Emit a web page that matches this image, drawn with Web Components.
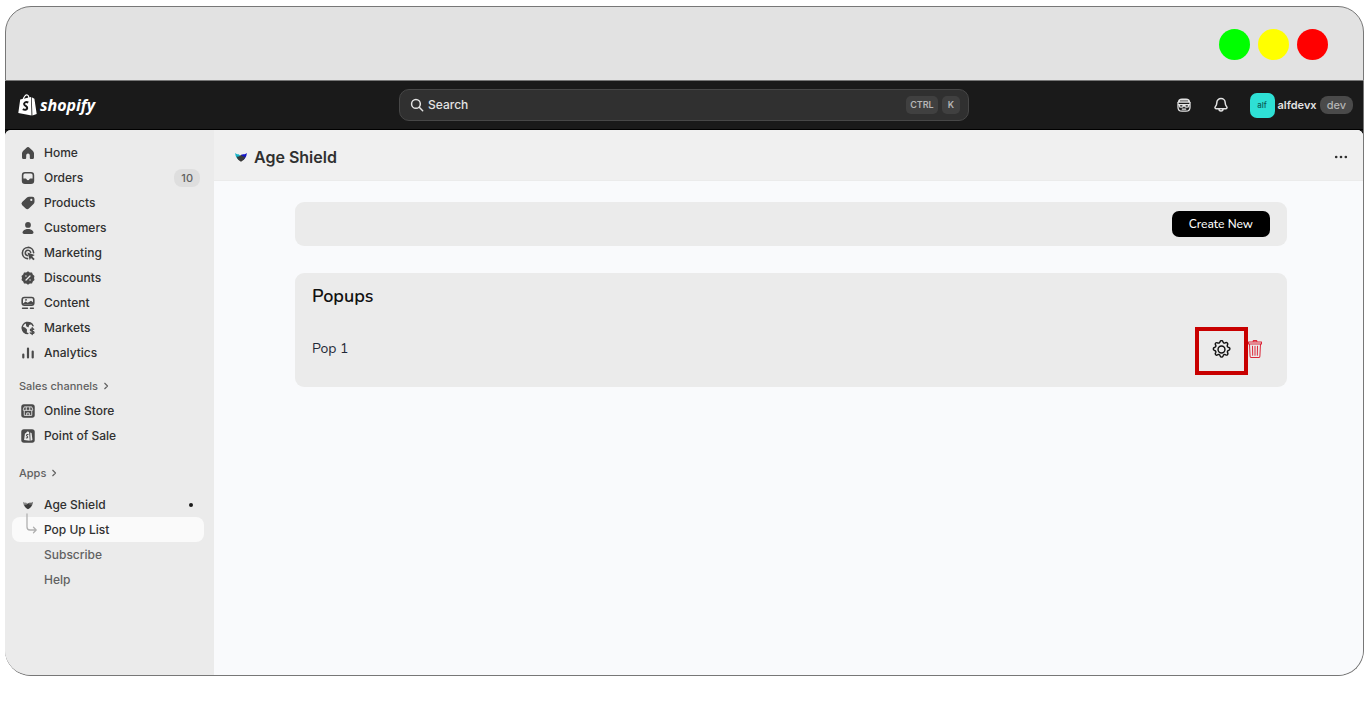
<!DOCTYPE html>
<html lang="en">
<head>
<meta charset="utf-8">
<meta name="viewport" content="width=device-width, initial-scale=1">
<title>Age Shield</title>
<style>
    body {
        margin: 0;
        background: #fff;
        color: #303030;
        font-family: Inter, "Liberation Sans", sans-serif;
        font-size: 12px;
    }
</style>
</head>
<body>
<window-frame>
    <top-bar></top-bar>
    <side-nav slot="side">
        <nav-item icon="home">Home</nav-item>
        <nav-item icon="orders" badge="10">Orders</nav-item>
        <nav-item icon="products">Products</nav-item>
        <nav-item icon="customers">Customers</nav-item>
        <nav-item icon="marketing">Marketing</nav-item>
        <nav-item icon="discounts">Discounts</nav-item>
        <nav-item icon="content">Content</nav-item>
        <nav-item icon="markets">Markets</nav-item>
        <nav-item icon="analytics">Analytics</nav-item>
        <nav-heading>Sales channels</nav-heading>
        <nav-item icon="store">Online Store</nav-item>
        <nav-item icon="pos">Point of Sale</nav-item>
        <nav-heading class="apps">Apps</nav-heading>
        <nav-item icon="shield" dot>Age Shield</nav-item>
        <nav-item icon="branch" current>Pop Up List</nav-item>
        <nav-item sub>Subscribe</nav-item>
        <nav-item sub>Help</nav-item>
    </side-nav>
    <app-page slot="page" heading="Age Shield">
        <panel-card class="actions">
            <create-button>Create New</create-button>
        </panel-card>
        <panel-card heading="Popups">
            <popup-row>Pop 1</popup-row>
        </panel-card>
    </app-page>
</window-frame>

<script>
const ICONS = {
    home: '<path fill="currentColor" d="M8.9 2.3a1.4 1.4 0 0 0-1.8 0L3.3 5.700A4 4 0 0 0 2 8.600V12.500A1.500 1.500 0 0 0 3.500 14H5.300a.9.9 0 0 0 .9-.9V10.400a1.800 1.800 0 0 1 3.600 0v2.700a.9.9 0 0 0 .9.9h1.800a1.500 1.500 0 0 0 1.500-1.500V8.600a4 4 0 0 0-1.300-2.900z"/>',
    orders: '<path fill="currentColor" fill-rule="evenodd" d="M5 2h6a3.200 3.200 0 0 1 3.200 3.200v5.600A3.200 3.200 0 0 1 11 14H5a3.200 3.200 0 0 1-3.200-3.200V5.200A3.200 3.200 0 0 1 5 2zm0 1.600A1.600 1.600 0 0 0 3.400 5.200V8.500h1.800c.9 0 1.200.4 1.500 1 .3.500.6.700 1.300.700s1-.2 1.300-.7c.3-.6.6-1 1.500-1h1.800V5.200A1.600 1.600 0 0 0 11 3.600z"/>',
    products: '<path fill="currentColor" fill-rule="evenodd" d="M9.300 1.800h3A2.200 2.200 0 0 1 14.500 4v2.700c0 .9-.3 1.700-1 2.400l-4.600 4.500a2.300 2.300 0 0 1-3.200 0L2.200 10.200a2.300 2.300 0 0 1 0-3.200l4.500-4.200c.7-.7 1.600-1 2.600-1zM11.300 6a1.100 1.100 0 1 0 0-2.200 1.100 1.100 0 0 0 0 2.200z"/>',
    customers: '<circle cx="8" cy="4.900" r="2.900" fill="currentColor"/><path fill="currentColor" d="M8 8.900c-3 0-5.500 1.700-5.500 3.700 0 .9.700 1.300 1.500 1.300h8c.8 0 1.500-.4 1.500-1.300 0-2-2.500-3.700-5.500-3.700z"/>',
    marketing: '<g fill="none" stroke="currentColor" stroke-width="1.600" stroke-linecap="round"><path d="M13.600 7.600A5.600 5.600 0 1 0 7.500 13.600"/><path d="M10.600 7.300A2.700 2.700 0 1 0 7.300 10.600"/></g><path fill="currentColor" d="M7.500 7.500l7.300 2.600-2.600 1.500 2.500 2.400-1.300 1.200-2.400-2.300-1.200 2.300z"/>',
    discounts: '<path fill="currentColor" d="M8 1.200l1.800 1.200 2.200.1.800 2.100L14.500 6 14 8l.5 2-1.700 1.400-.8 2.100-2.200.1L8 14.800l-1.800-1.200-2.200-.1-.8-2.100L1.500 10 2 8l-.5-2 1.700-1.400.8-2.100 2.200-.1z"/><g fill="none" stroke="#ebebeb" stroke-width="1.300" stroke-linecap="round"><path d="M6 10l4-4M5.900 6h.1M10 10h.1"/></g>',
    content: '<rect x="2.200" y="2.500" width="11.600" height="7.800" rx="2.200" fill="none" stroke="currentColor" stroke-width="1.600"/><path fill="currentColor" d="M3 8.500l2.500-2 2.200 1.300L11 5.700l2.300 1.900v2H3zM6 4a.9.900 0 1 0 .1 1.800A.9.900 0 0 0 6 4z"/><path stroke="currentColor" stroke-width="1.400" stroke-linecap="round" d="M2.500 13.300h5M10.400 13.300h3"/>',
    markets: '<path fill="none" stroke="currentColor" stroke-width="1.500" stroke-linecap="round" d="M7.800 13.600A5.600 5.600 0 1 1 13 5.800"/><path fill="currentColor" d="M2.300 6.800L5 7.500l2 2-.3 4.300L3.200 12zM5.800 2.500L9 2l3.200 2-2.900.9-.9 2.600-2.200-1.300z"/><path fill="none" stroke="currentColor" stroke-width="1.400" stroke-linecap="round" d="M13.700 9.300c-.5-.7-3.300-.8-3.300.8s3.600.8 3.600 2.300-3 1.400-3.700.5M12.200 7.800v6.800"/>',
    analytics: '<path stroke="currentColor" stroke-width="2.200" stroke-linecap="round" d="M3.300 9.500v3M8 3.600v8.900M12.700 6.600v5.900"/>',
    store: '<rect x=".3" y=".3" width="15.400" height="15.400" rx="3" fill="currentColor"/><g fill="none" stroke="#ebebeb"><path d="M3.800 3.300h8.400L13.300 6v1.200H2.700V6zM3.700 7.500V13h8.600V7.500M6.500 13v-2.800h3V13M6 3.500v4M10 3.500v4"/></g>',
    pos: '<rect x=".3" y=".3" width="15.400" height="15.400" rx="3" fill="currentColor"/><path fill="#ebebeb" d="M4.500 5l1.300-.5C6.300 2.900 8 2 9.200 3.500L10 13.500l-6.500-1zM10.500 3.900l1.600.7 1 8.100-2.200.8z"/><path fill="none" stroke="#4a4a4a" stroke-width="1.200" d="M8.500 6.400c-2.200-.7-2.800 1-1.600 1.800s1 2.500-1.300 1.900"/>',
    shield: '<path fill="var(--left, #8b8b8b)" d="M1.300 3.500c1.500 1.300 3 1.500 4 1.300L8 7l-2.500 4.500C3 10 1.700 7.500 1.300 3.500z"/><path fill="var(--right, #666)" d="M14.700 3.500c-1.500 1.300-3 1.500-4 1.300L8 5.500v5l3 .8c2.200-1.600 3.400-4.300 3.700-7.800z"/><path fill="#3a3a3a" d="M3 7.500c2.500.6 4-.6 5-2 1 1.400 2.500 2.600 5 2-.8 3-2.500 4.800-5 6-2.500-1.200-4.200-3-5-6z"/>',
    chevron: '<path fill="none" stroke="currentColor" stroke-width="2.300" stroke-linecap="round" stroke-linejoin="round" d="M5.500 2.500L11 8l-5.500 5.500"/>',
    search: '<g fill="none" stroke="currentColor" stroke-width="1.700" stroke-linecap="round"><circle cx="6.800" cy="6.800" r="5"/><path d="M10.600 10.600l3.900 3.900"/></g>',
    sidekick: '<path fill="currentColor" d="M6 1.500h4c2.600 0 4.300 1.500 4.300 4.200H1.700C1.700 3 3.400 1.500 6 1.500z"/><path stroke="#1a1a1a" stroke-width=".7" d="M4 3.900h8"/><g fill="none" stroke="currentColor" stroke-width="1.300"><path d="M2 5v5.200c0 2.700 1.500 4 4 4h4c2.500 0 4-1.300 4-4V5"/><path d="M2 7.600h12M3.500 8v1q0 1.200 1.500 1.200h.6q1.400 0 1.400-1.200h2q0 1.200 1.400 1.200h.6q1.500 0 1.500-1.200V8M5.800 12.200h4.400"/></g>',
    bell: '<g fill="none" stroke="currentColor" stroke-width="1.500" stroke-linejoin="round"><path d="M8 1.500A4.200 4.200 0 0 0 3.800 5.700c0 2-.5 2.900-1.500 4-.9 1 .1 2 1 2h9.400c.9 0 1.900-1 1-2-1-1.100-1.500-2-1.500-4A4.200 4.200 0 0 0 8 1.500z"/><path d="M6 12a2 2 0 0 0 4 0"/></g>',
    dots: '<g fill="currentColor"><circle cx="2.500" cy="8" r="1.500"/><circle cx="8" cy="8" r="1.500"/><circle cx="13.500" cy="8" r="1.500"/></g>',
    gear: '<g fill="none" stroke="currentColor" stroke-width="1.200"><circle cx="8" cy="8" r="2.900"/><path stroke-linejoin="round" d="M6.800 1.400c.4-1.200 2-1.200 2.400 0l.1.300a1.300 1.300 0 0 0 1.800.8l.4-.2c1-.5 2.200.6 1.600 1.700l-.1.300a1.300 1.300 0 0 0 .8 1.900l.4.100c1.200.3 1.200 2 0 2.400l-.4.100a1.300 1.300 0 0 0-.7 1.800l.1.300c.6 1.100-.5 2.200-1.600 1.700l-.3-.2a1.300 1.300 0 0 0-1.900.8l-.1.300c-.4 1.200-2 1.200-2.400 0l-.1-.3a1.300 1.300 0 0 0-1.900-.8l-.3.200c-1.100.6-2.200-.5-1.700-1.600l.2-.4a1.300 1.300 0 0 0-.8-1.800l-.3-.1c-1.200-.4-1.200-2 0-2.400l.3-.1a1.300 1.300 0 0 0 .8-1.900l-.2-.3c-.5-1.100.6-2.200 1.700-1.600l.3.100a1.300 1.300 0 0 0 1.800-.8z"/></g>',
    trash: '<g fill="none" stroke="currentColor" stroke-linecap="round" stroke-linejoin="round"><path d="M2.500 3.500l.6 11c0 .6.400 1 1 1h7.800c.6 0 1-.4 1-1l.6-11M1.500 1.800h13v1.700h-13zM6 1.500l.4-1h3.200l.4 1M5.500 5.500l.2 8M8 5.500v8M10.500 5.500l-.2 8"/></g>'
};

function icon(name, size = 16) {
    return `<svg viewBox="0 0 16 16" width="${size}" height="${size}" aria-hidden="true">${ICONS[name]}</svg>`;
}

class WindowFrame extends HTMLElement {
    connectedCallback() {
        this.attachShadow({ mode: 'open' });
        this.shadowRoot.innerHTML = `
            <style>
                :host {
                    display: flex;
                    flex-direction: column;
                    box-sizing: border-box;
                    min-height: 100vh;
                    padding: 6px 2px 29px 5px;
                }
                .title-bar {
                    display: flex;
                    justify-content: flex-end;
                    gap: 8px;
                    padding: 22px 35px 20px;
                    border: 1px solid #777;
                    border-radius: 26px 26px 0 0;
                    background: #e2e2e2;
                }
                .light {
                    width: 31px;
                    height: 31px;
                    border-radius: 50%;
                }
                .screen {
                    flex: 1;
                    display: flex;
                    flex-direction: column;
                    overflow: hidden;
                    border: solid #777;
                    border-width: 0 1px 1px 0;
                    border-radius: 0 0 26px 26px;
                    background: #1a1a1a;
                }
                .content {
                    flex: 1;
                    display: grid;
                    grid-template-columns: 209px 1fr;
                    overflow: hidden;
                    border-radius: 6px 6px 0 0;
                    background: #f9fafc;
                }
            </style>
            <div class="title-bar">
                <span class="light" style="background: #0f0"></span>
                <span class="light" style="background: #ff0"></span>
                <span class="light" style="background: #f00"></span>
            </div>
            <div class="screen">
                <slot></slot>
                <div class="content">
                    <slot name="side"></slot>
                    <slot name="page"></slot>
                </div>
            </div>
        `;
    }
}

class TopBar extends HTMLElement {
    connectedCallback() {
        this.attachShadow({ mode: 'open' });
        this.shadowRoot.innerHTML = `
            <style>
                :host {
                    display: grid;
                    grid-template-columns: 1fr minmax(200px, 570px) 1fr;
                    align-items: center;
                    height: 48px;
                    padding: 0 10px;
                    border-bottom: 1px solid #000;
                    background: #1a1a1a;
                    color: #e3e3e3;
                }
                .logo {
                    display: flex;
                    align-items: center;
                    gap: 3px;
                    padding-left: 3px;
                    color: #fff;
                    font: italic 700 16px/24px "Open Sans", sans-serif;
                    text-decoration: none;
                }
                .search {
                    display: flex;
                    align-items: center;
                    gap: 4px;
                    box-sizing: border-box;
                    height: 32px;
                    padding: 0 8px 0 10px;
                    border: 1px solid #474747;
                    border-radius: 10px;
                    background: #303030;
                }
                input {
                    flex: 1;
                    min-width: 0;
                    padding: 0;
                    border: 0;
                    outline: 0;
                    background: none;
                    color: inherit;
                    font: 500 12px/16px Inter, sans-serif;
                }
                input::placeholder {
                    color: #e3e3e3;
                    opacity: 1;
                }
                kbd {
                    padding: 0 4px;
                    border-radius: 5px;
                    background: #404040;
                    color: #b5b5b5;
                    font: 600 9px/18px Inter, sans-serif;
                }
                kbd + kbd {
                    padding: 0 6px;
                }
                .tools {
                    display: flex;
                    align-items: center;
                    justify-content: flex-end;
                    gap: 21px;
                }
                button {
                    display: flex;
                    align-items: center;
                    padding: 0;
                    border: 0;
                    background: none;
                    color: inherit;
                    font: inherit;
                }
                .account {
                    gap: 3px;
                    font: 600 11px/16px Inter, sans-serif;
                }
                .avatar {
                    width: 25px;
                    border-radius: 7px;
                    background: #2ee0d5;
                    color: #0b5c57;
                    font: 500 8px/25px Inter, sans-serif;
                    text-align: center;
                }
                .plan {
                    padding: 0 7px;
                    border-radius: 8px;
                    background: #4a4a4a;
                    color: #b5b5b5;
                    font: 500 11px/18px Inter, sans-serif;
                }
            </style>
            <a class="logo" href="#">
                <svg width="19" height="22" viewBox="0 0 19 22" aria-hidden="true">
                    <path fill="#fff" d="M2.200 5.500L13 3l.5 18.500L.3 19zM13.700 3.200l2.700 1.500L18.700 20l-4.300 1.500z"/>
                    <path fill="none" stroke="#fff" stroke-width="1.200" d="M5 6.500C5.500 2.500 8 .7 9.200 1c1.300.3 1.800 2 1.700 4"/>
                    <path fill="none" stroke="#1a1a1a" stroke-width="2" d="M10.300 8.500C7.500 7.300 5.600 9 6.200 10.500s3.200 1.700 3 3.700-2.800 2-4.400 1"/>
                </svg>
                shopify
            </a>
            <label class="search">
                ${icon('search', 14)}
                <input type="text" placeholder="Search" aria-label="Search">
                <kbd>CTRL</kbd><kbd>K</kbd>
            </label>
            <div class="tools">
                <button aria-label="Sidekick">${icon('sidekick')}</button>
                <button aria-label="Notifications">${icon('bell')}</button>
                <button class="account">
                    <span class="avatar">alf</span>alfdevx<span class="plan">dev</span>
                </button>
            </div>
        `;
    }
}

class SideNav extends HTMLElement {
    connectedCallback() {
        this.attachShadow({ mode: 'open' });
        this.shadowRoot.innerHTML = `
            <style>
                :host {
                    display: block;
                    padding: 10px 10px 0 7px;
                    background: #ebebeb;
                }
                ::slotted(nav-heading) {
                    margin-top: 8px;
                }
                ::slotted(.apps) {
                    margin: 12px 0 7px;
                }
            </style>
            <nav><slot></slot></nav>
        `;
    }
}

class NavItem extends HTMLElement {
    iconMarkup() {
        const name = this.getAttribute('icon');
        const sizes = { store: 14, pos: 14, shield: 12 };
        if (name === 'branch') {
            return `<svg class="branch" width="14" height="22" viewBox="0 0 14 22" aria-hidden="true">
                <path fill="none" stroke="#b0b0b0" stroke-width="1.300" stroke-linecap="round" stroke-linejoin="round" d="M2 1v13q0 3 3 3h6M8.500 14.300L11.200 17l-2.700 2.700"/>
            </svg>`;
        }
        return name ? icon(name, sizes[name]) : '';
    }

    connectedCallback() {
        const badge = this.getAttribute('badge');
        this.attachShadow({ mode: 'open' });
        this.shadowRoot.innerHTML = `
            <style>
                :host {
                    display: block;
                }
                a {
                    display: flex;
                    align-items: center;
                    gap: 8px;
                    height: 25px;
                    padding: 0 4px 0 8px;
                    border-radius: 8px;
                    color: #303030;
                    font: 500 12px/16px Inter, sans-serif;
                    text-decoration: none;
                }
                :host([sub]) a {
                    color: #616161;
                }
                :host([current]) a {
                    background: #fafafa;
                }
                .icon {
                    position: relative;
                    display: flex;
                    justify-content: center;
                    width: 16px;
                    color: #4a4a4a;
                }
                /* elbow from the parent app down to its open page */
                .branch {
                    position: absolute;
                    left: 5px;
                    bottom: -5px;
                }
                .label {
                    flex: 1;
                }
                .badge {
                    padding: 0 7px;
                    border-radius: 8px;
                    background: #dedede;
                    color: #616161;
                    font-size: 11px;
                    line-height: 18px;
                }
                .dot {
                    width: 4px;
                    height: 4px;
                    margin-right: 7px;
                    border-radius: 50%;
                    background: #1a1a1a;
                }
            </style>
            <a href="#" ${this.hasAttribute('current') ? 'aria-current="page"' : ''}>
                <span class="icon">${this.iconMarkup()}</span>
                <span class="label"><slot></slot></span>
                ${badge ? `<span class="badge">${badge}</span>` : ''}
                ${this.hasAttribute('dot') ? '<span class="dot"></span>' : ''}
            </a>
        `;
    }
}

class NavHeading extends HTMLElement {
    connectedCallback() {
        this.attachShadow({ mode: 'open' });
        this.shadowRoot.innerHTML = `
            <style>
                :host {
                    display: block;
                }
                a {
                    display: flex;
                    align-items: center;
                    gap: 4px;
                    height: 25px;
                    padding: 0 7px;
                    color: #616161;
                    font: 500 11px/16px Inter, sans-serif;
                    text-decoration: none;
                }
            </style>
            <a href="#"><slot></slot>${icon('chevron', 8)}</a>
        `;
    }
}

class AppPage extends HTMLElement {
    connectedCallback() {
        this.attachShadow({ mode: 'open' });
        this.shadowRoot.innerHTML = `
            <style>
                :host {
                    display: block;
                    background: #f9fafc;
                }
                header {
                    display: flex;
                    align-items: center;
                    gap: 6px;
                    height: 51px;
                    padding: 3px 15px 0 20px;
                    box-sizing: border-box;
                    border-bottom: 1px solid #ebebeb;
                    background: #f0f0f0;
                    --left: #19b5c9;
                    --right: #1414c8;
                }
                h1 {
                    flex: 1;
                    margin: 0;
                    font: 600 16px/24px Inter, sans-serif;
                }
                button {
                    display: flex;
                    padding: 0;
                    border: 0;
                    background: none;
                    color: #303030;
                }
                main {
                    display: grid;
                    gap: 27px;
                    padding: 21px 76px 0 81px;
                }
            </style>
            <header>
                ${icon('shield', 14)}
                <h1>${this.getAttribute('heading')}</h1>
                <button aria-label="More actions">${icon('dots', 14)}</button>
            </header>
            <main><slot></slot></main>
        `;
    }
}

class PanelCard extends HTMLElement {
    connectedCallback() {
        const heading = this.getAttribute('heading');
        this.attachShadow({ mode: 'open' });
        this.shadowRoot.innerHTML = `
            <style>
                :host {
                    display: block;
                    padding: 11px 24px 26px 17px;
                    border-radius: 9px;
                    background: #ebebeb;
                    color: #1f2937;
                }
                :host(.actions) {
                    padding: 9px 17px;
                }
                h2 {
                    margin: 0 0 29px;
                    color: #111;
                    font: 600 18px/24px "Nunito", "Open Sans", sans-serif;
                }
            </style>
            ${heading ? `<h2>${heading}</h2>` : ''}
            <slot></slot>
        `;
    }
}

class CreateButton extends HTMLElement {
    connectedCallback() {
        this.attachShadow({ mode: 'open' });
        this.shadowRoot.innerHTML = `
            <style>
                :host {
                    display: flex;
                    justify-content: flex-end;
                }
                button {
                    padding: 0 17px;
                    border: 0;
                    border-radius: 7px;
                    background: #000;
                    color: #fff;
                    font: 500 12px/26px "Nunito", "Open Sans", sans-serif;
                }
            </style>
            <button><slot></slot></button>
        `;
    }
}

class PopupRow extends HTMLElement {
    connectedCallback() {
        this.attachShadow({ mode: 'open' });
        this.shadowRoot.innerHTML = `
            <style>
                :host {
                    display: flex;
                    align-items: center;
                    gap: 16px;
                    font: 400 14px/24px "Nunito", "Open Sans", sans-serif;
                }
                .name {
                    flex: 1;
                }
                button {
                    display: flex;
                    padding: 0;
                    border: 0;
                    background: none;
                }
                .settings {
                    position: relative;
                    color: #111;
                }
                /* marker drawn over the settings button */
                .settings::after {
                    content: "";
                    position: absolute;
                    inset: -13px -17px -16px;
                    border: 4px solid #c80000;
                }
                .delete {
                    color: #dc2638;
                }
            </style>
            <span class="name"><slot></slot></span>
            <button class="settings" aria-label="Settings">${icon('gear', 19)}</button>
            <button class="delete" aria-label="Delete">
                <svg width="16" height="18" viewBox="0 0 16 16" preserveAspectRatio="none" aria-hidden="true">${ICONS.trash}</svg>
            </button>
        `;
    }
}

customElements.define('window-frame', WindowFrame);
customElements.define('top-bar', TopBar);
customElements.define('side-nav', SideNav);
customElements.define('nav-item', NavItem);
customElements.define('nav-heading', NavHeading);
customElements.define('app-page', AppPage);
customElements.define('panel-card', PanelCard);
customElements.define('create-button', CreateButton);
customElements.define('popup-row', PopupRow);
</script>
</body>
</html>
